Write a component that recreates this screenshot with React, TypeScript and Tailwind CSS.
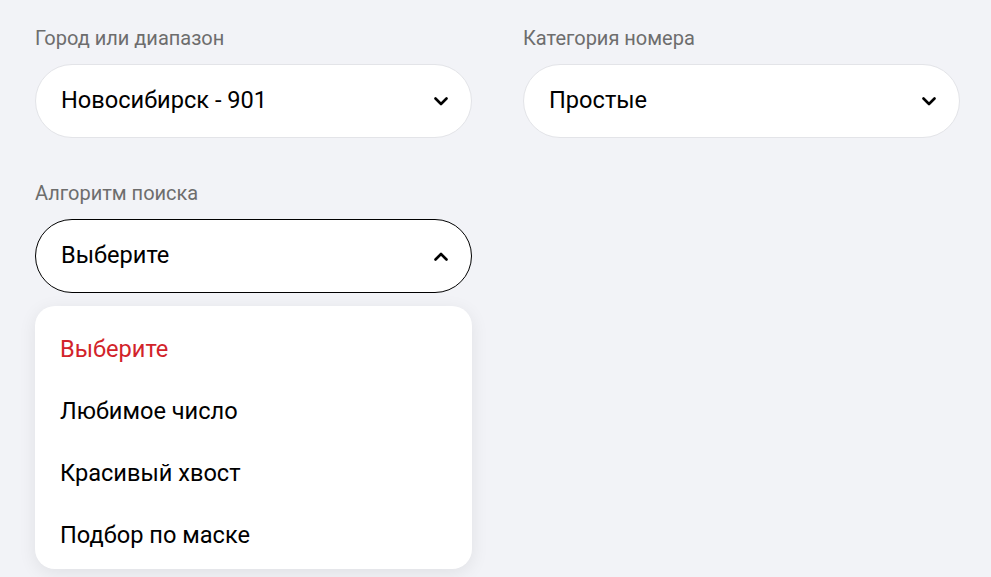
const options = ["Выберите", "Любимое число", "Красивый хвост", "Подбор по маске"];

function Chevron({ up = false }: { up?: boolean }) {
  return (
    <svg width="14" height="9" viewBox="0 0 14 9" fill="none" className="shrink-0">
      <polyline
        points={up ? "1.5,7.5 7,2 12.5,7.5" : "1.5,1.5 7,7 12.5,1.5"}
        stroke="black"
        strokeWidth="2.6"
        strokeLinecap="round"
        strokeLinejoin="round"
      />
    </svg>
  );
}

function Field({ label, value, open = false }: { label: string; value: string; open?: boolean }) {
  return (
    <div className="flex flex-col">
      <span className="text-[20px] leading-[24px] text-[#6d6d6d]">{label}</span>
      <div
        className={`mt-[14px] flex h-[74px] items-center justify-between rounded-full bg-white pl-[25px] pr-[23px] ${
          open ? "border border-black" : "border border-[#e3e4e8]"
        }`}
      >
        <span className="text-[23.6px] text-black">{value}</span>
        <Chevron up={open} />
      </div>
    </div>
  );
}

export default function App() {
  return (
    <div className="min-h-[577px] bg-[#f2f3f7] pl-[35px] pr-[31px] pt-[26px] font-['Roboto',sans-serif]">
      <div className="grid grid-cols-2 gap-x-[51px] gap-y-[43px]">
        <Field label="Город или диапазон" value="Новосибирск - 901" />
        <Field label="Категория номера" value="Простые" />
        <div>
          <Field label="Алгоритм поиска" value="Выберите" open />
          <div className="mt-[13px] rounded-[20px] bg-white pb-[2px] pt-[13px] shadow-[0_4px_18px_rgba(0,0,0,0.08)]">
            {options.map((o, i) => (
              <div key={o} className={`flex h-[62px] items-center px-[25px] text-[23.6px] ${i === 0 ? "text-[#d2232a]" : "text-black"}`}>
                {o}
              </div>
            ))}
          </div>
        </div>
      </div>
    </div>
  );
}
